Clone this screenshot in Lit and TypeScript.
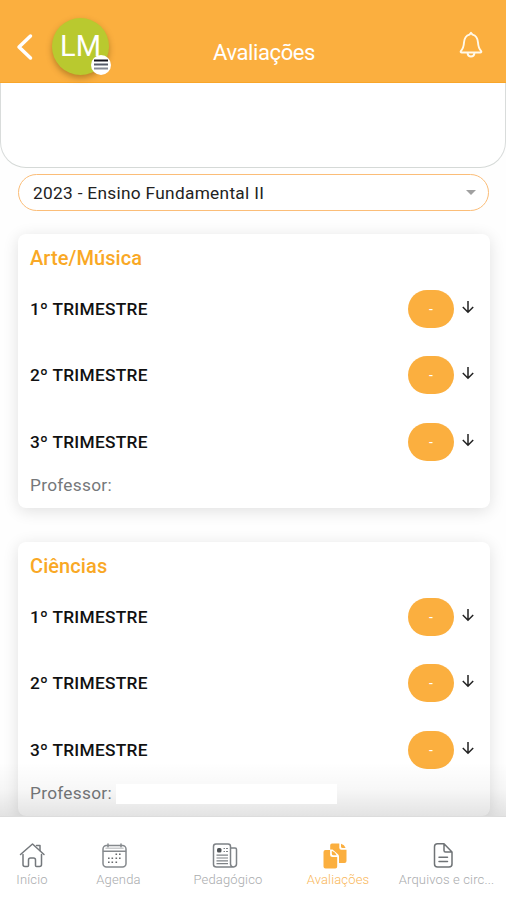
import { LitElement, html, css, svg, nothing } from "lit";
import { customElement, property } from "lit/decorators.js";

const icons = {
  home: svg`<g fill="none" stroke="#74787c" stroke-width="1.5" stroke-linejoin="round" stroke-linecap="round">
    <path d="M1.500 12.500 13.500 2l11.500 10.500"/><path d="M17.500 3.500h3.500v5"/>
    <path d="M4 12.500V22.500q0 2 2 2h2.500q1 0 1-1V18q0-2 2-2h3q2 0 2 2v5.500q0 1 1 1H20.500q2 0 2-2V12.500"/></g>`,
  calendar: svg`<g fill="none" stroke="#85898d" stroke-width="1.500" stroke-linecap="round">
    <rect x="2" y="3.500" width="23" height="21.500" rx="3.500"/><path d="M2.500 9.200h22M7 2v3M20 2v3"/><path d="M5 6.300h17" stroke="#c9cbcd"/></g>
    <path fill="#66696c" d="M14.500 11.500h1.600v1.600h-1.600zM18 11.500h1.600v1.600h-1.600zM7 15.500h1.600v1.600h-1.600zM10.500 15.500h1.600v1.600h-1.600zM14.500 15.500h1.600v1.600h-1.600zM18 15.500h1.600v1.600h-1.600zM7 19.500h1.600v1.600h-1.600zM10.500 19.500h1.600v1.600h-1.600zM14.500 19.500h1.600v1.600h-1.600z"/>`,
  news: svg`<g fill="none" stroke="#7e8286" stroke-width="1.500" stroke-linejoin="round">
    <path d="M19.500 22.500V4.500Q19.500 2 17 2H5Q2.500 2 2.500 4.500v18q0 2.500 3 2.500h17q3-.3 3-3V7.500q0-1.500-1.500-1.500h-4.500M19.500 22q.3 2.800 3 3"/>
    <path d="M12.500 6.500H14M15 6.500h2M12.500 9.500H14M15 9.500h2M5.500 13.200h11.500M5.500 16h11.500M5.500 18.800h11.500M5.500 21.600h11.500" stroke-width="1.200"/></g>
    <rect x="6" y="6" width="4.500" height="4.500" rx="1.500" fill="#505457"/>`,
  copies: svg`<path fill="#fbaf3f" d="M11 1.500h7.300v4.300q0 2 2 2h5.200V19q0 2-2 2h-5.500v-6.500q0-1.300-1-2.300L11.500 7.500H9.200V3.300q0-1.800 1.800-1.800z"/>
    <path fill="#fbaf3f" d="M20 1.800q3.500 1 4.600 4.300h-3Q20 6 20 4.500z"/>
    <path fill="#fbaf3f" d="M4.500 8h4.600v4.500q0 2.500 2.500 2.500h4.600v9.500q0 2-2 2H4.500q-2 0-2-2V10q0-2 2-2z"/>
    <path fill="#fbaf3f" d="M10.800 8.800q3.600 1 4.900 4.500h-3q-1.900 0-1.900-1.900z"/>`,
  file: svg`<g fill="none" stroke="#6f7376" stroke-width="1.500" stroke-linejoin="round" stroke-linecap="round">
    <path d="M15 1.800H8.500Q5.500 1.800 5.500 4.800V22q0 3 3 3h11.500q3 0 3-3V10zv6.700q0 1.500 1.500 1.500H23M10 15.200h8.500M10 19.500h8.500"/></g>`,
};

@customElement("grade-card")
class GradeCard extends LitElement {
  @property() subject = "";
  @property({ type: Boolean }) redacted = false;

  static styles = css`
    :host { display: block; height: 274px; box-sizing: border-box; padding: 12px 12px 0; border-radius: 8px;
      background: #fff; box-shadow: 0 3px 16px rgba(0, 0, 0, 0.12); }
    .title { height: 26px; line-height: 25px; margin-bottom: 4px; font-size: 20px; letter-spacing: 0.080px; font-weight: 500; color: #f9a825; }
    .row { display: flex; align-items: center; height: 66.300px; color: #111; }
    .term { flex: 1; font-size: 17.300px; letter-spacing: 0.270px; font-weight: 500; }
    .grade { display: flex; align-items: center; justify-content: center; width: 46px; height: 38px; border-radius: 19px;
      background: #fbaf3f; color: #fff; font-size: 14px; }
    .arrow { width: 14px; height: 16px; margin: 0 3px 4px 7px; }
    .teacher { display: flex; align-items: center; height: 20px; font-size: 17.300px; color: #76787a; letter-spacing: 0.270px; }
    .mask { position: relative; z-index: 2; flex: none; width: 221px; height: 20px; margin: 2px 0 0 4px; background: #fff; }
  `;

  render() {
    return html`
      <div class="title">${this.subject}</div>
      ${[1, 2, 3].map((n) => html`<div class="row">
        <span class="term">${n}º TRIMESTRE</span><span class="grade">-</span>
        <svg class="arrow" viewBox="0 0 14 16"><path d="M7 2v11M1.800 8 7 13.200 12.200 8" fill="none" stroke="#222" stroke-width="1.500"/></svg>
      </div>`)}
      <div class="teacher">Professor:${this.redacted ? html`<span class="mask"></span>` : nothing}</div>`;
  }
}

@customElement("app-root")
class AppRoot extends LitElement {
  static styles = css`
    :host { display: flex; flex-direction: column; width: 506px; height: 900px; overflow: hidden; background: #fefefe;
      font-family: Roboto, "Liberation Sans", sans-serif; }
    * { box-sizing: border-box; }
    header { display: grid; grid-template-columns: 52px 58px 1fr 70px; flex: none; height: 83px; background: #fbaf3f;
      border-bottom: 1px solid #f9a62a; color: #fff; }
    .back { width: 18px; height: 30px; margin: 32px 0 0 16px; }
    .avatar { position: relative; width: 57px; height: 57px; margin-top: 18px; border-radius: 50%; background: #b9c92f;
      box-shadow: 0 3px 6px rgba(90, 60, 0, 0.4); font-size: 29px; line-height: 57px; text-align: center; }
    .menu { position: absolute; right: -2px; bottom: 0; width: 20px; height: 20px; }
    h1 { margin: 39px 0 0 103px; font-size: 22px; line-height: 28px; letter-spacing: -0.400px; font-weight: 400; white-space: nowrap; }
    .bell { width: 24px; height: 28px; margin: 31px 0 0 23px; }
    .panel { flex: none; height: 85px; border: 1px solid #d9dcdb; border-top: 0; border-bottom: 1px solid #d5d9d7;
      border-radius: 0 0 26px 26px; background: #fff; }
    .select { display: flex; align-items: center; justify-content: space-between; flex: none; height: 37px;
      margin: 6px 17px 23px 18px; padding: 0 12px 0 14px; border: 1.500px solid #fbbd78; border-radius: 19px;
      background: #fff; color: #222; font-size: 17.300px; letter-spacing: 0.300px; }
    .caret { width: 10px; height: 5px; }
    main { position: relative; display: flex; flex-direction: column; gap: 34px; flex: 1; min-height: 0; overflow: hidden;
      margin-top: -20px; padding: 20px 16px 0 18px; }
    grade-card { flex: none; }
    .fade { position: absolute; z-index: 1; inset: auto 0 0 0; height: 55px; border-bottom: 1px solid #dcdcdc;
      background: linear-gradient(transparent, rgba(0, 0, 0, 0.030) 50%, rgba(0, 0, 0, 0.110)); }
    nav { display: grid; grid-template-columns: 64px 109px 110px 110px 107px; flex: none; height: 83px; padding-top: 25px; background: #fff; }
    .tab { display: flex; flex-direction: column; align-items: center; color: #a9abad; font-size: 13px; line-height: 16px;
      letter-spacing: 0.150px; white-space: nowrap; font-weight: 300; }
    .tab svg { width: 27px; height: 27px; margin: 0 0 3px; }
    .tab:not(:first-child) svg { margin-right: 8px; }
    .active { color: #f9b75a; }
  `;

  render() {
    const tabs = [
      ["Início", icons.home], ["Agenda", icons.calendar], ["Pedagógico", icons.news],
      ["Avaliações", icons.copies], ["Arquivos e circ...", icons.file],
    ] as const;
    return html`
      <header>
        <svg class="back" viewBox="0 0 18 30"><path d="M14.500 4 3 15l11.500 11" fill="none" stroke="#fff" stroke-width="3.500" stroke-linecap="round" stroke-linejoin="round"/></svg>
        <div class="avatar">LM
          <svg class="menu" viewBox="0 0 20 20"><circle cx="10" cy="10" r="10" fill="#fff"/><path d="M3 5.500h14" stroke="#171720" stroke-width="2"/><path d="M3 9.500h14" stroke="#555b68" stroke-width="2"/><path d="M3 13.500h14" stroke="#858a95" stroke-width="2"/></svg>
        </div>
        <h1>Avaliações</h1>
        <svg class="bell" viewBox="0 0 24 28"><g fill="none" stroke="#fff9ea" stroke-width="1.900" stroke-linejoin="round"><path d="M12 1.800 10.500 3.600C7 4.500 5.300 7.500 5 11.500c-.3 4.500-1.200 6.500-3 8.300-.8 1-.3 1.700.8 1.700h18.400c1.100 0 1.600-.7.8-1.700-1.800-1.800-2.700-3.800-3-8.300-.3-4-2-7-5.500-7.900z"/><path d="M8.500 22c.3 2.200 1.700 3.500 3.500 3.500s3.200-1.300 3.500-3.500"/></g></svg>
      </header>
      <div class="panel"></div>
      <div class="select"><span>2023 - Ensino Fundamental II</span><svg class="caret" viewBox="0 0 10 5"><path d="M0 0h10L5 5z" fill="#a0a0a0"/></svg></div>
      <main>
        <grade-card subject="Arte/Música"></grade-card>
        <grade-card subject="Ciências" redacted></grade-card>
        <div class="fade"></div>
      </main>
      <nav>${tabs.map(([label, icon], i) => html`<div class="tab ${i === 3 ? "active" : ""}"><svg viewBox="0 0 27 27">${icon}</svg><span>${label}</span></div>`)}</nav>`;
  }
}
